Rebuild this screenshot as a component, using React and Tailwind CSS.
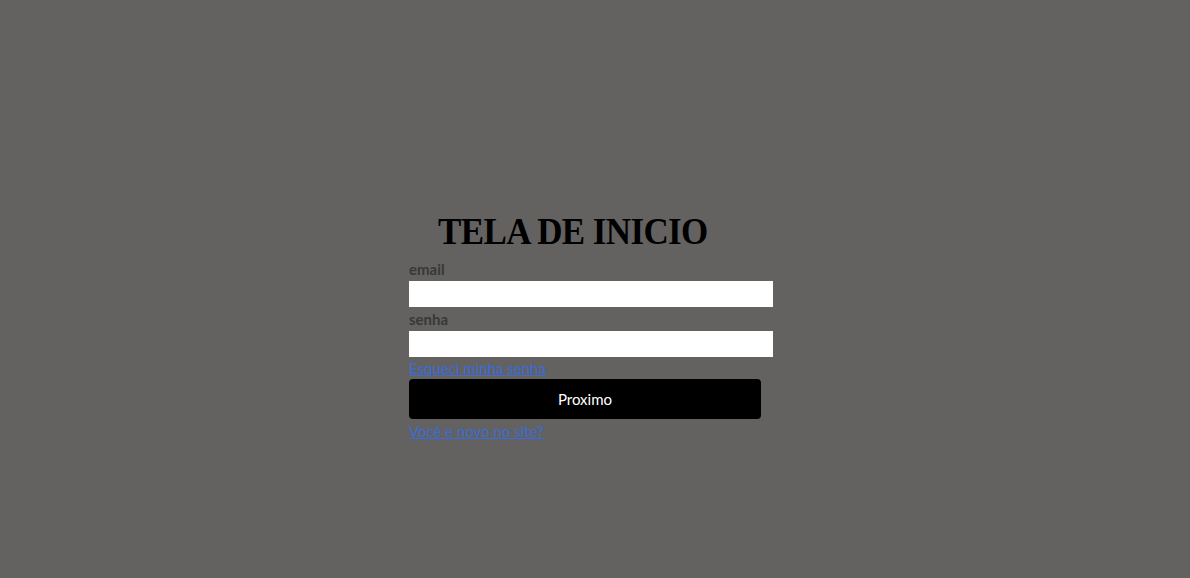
export default function App() {
  return (
    <div className="min-h-[578px] w-full bg-[#636260] font-['Lato','Open_Sans',sans-serif]">
      <div className="w-[364px] ml-[409px] pt-[209px]">
        {/* Titulo */}
        <h1 className="h-[50px] pl-[29px] font-['Liberation_Serif',serif] text-[35px] leading-[50px] font-bold text-black tracking-[-0.6px] origin-bottom-left scale-y-[1.08]">
          TELA DE INICIO
        </h1>

        <form className="flex flex-col" onSubmit={(e) => e.preventDefault()}>
          <label className="h-[22px] pt-[1px] text-[15px] leading-[19px] font-bold text-[#383838]">email</label>
          <input type="email" className="h-[26px] w-[364px] bg-white border-0 outline-none" />

          <label className="h-[23px] mt-[1px] pt-[1px] text-[15px] leading-[21px] font-bold text-[#383838]">senha</label>
          <input type="password" className="h-[26px] w-[364px] bg-white border-0 outline-none" />

          <a href="#" className="h-[22px] text-[15px] leading-[23px] text-[#3a6bd8] underline self-start">
            Esqueci minha senha
          </a>

          <button type="submit" className="h-[40px] w-[352px] rounded-[4px] bg-black text-white text-[15px]">
            Proximo
          </button>

          <a href="#" className="h-[23px] mt-[1px] text-[15px] leading-[23px] text-[#3a6bd8] underline self-start">
            Você e novo no site?
          </a>
        </form>
      </div>
    </div>
  );
}
